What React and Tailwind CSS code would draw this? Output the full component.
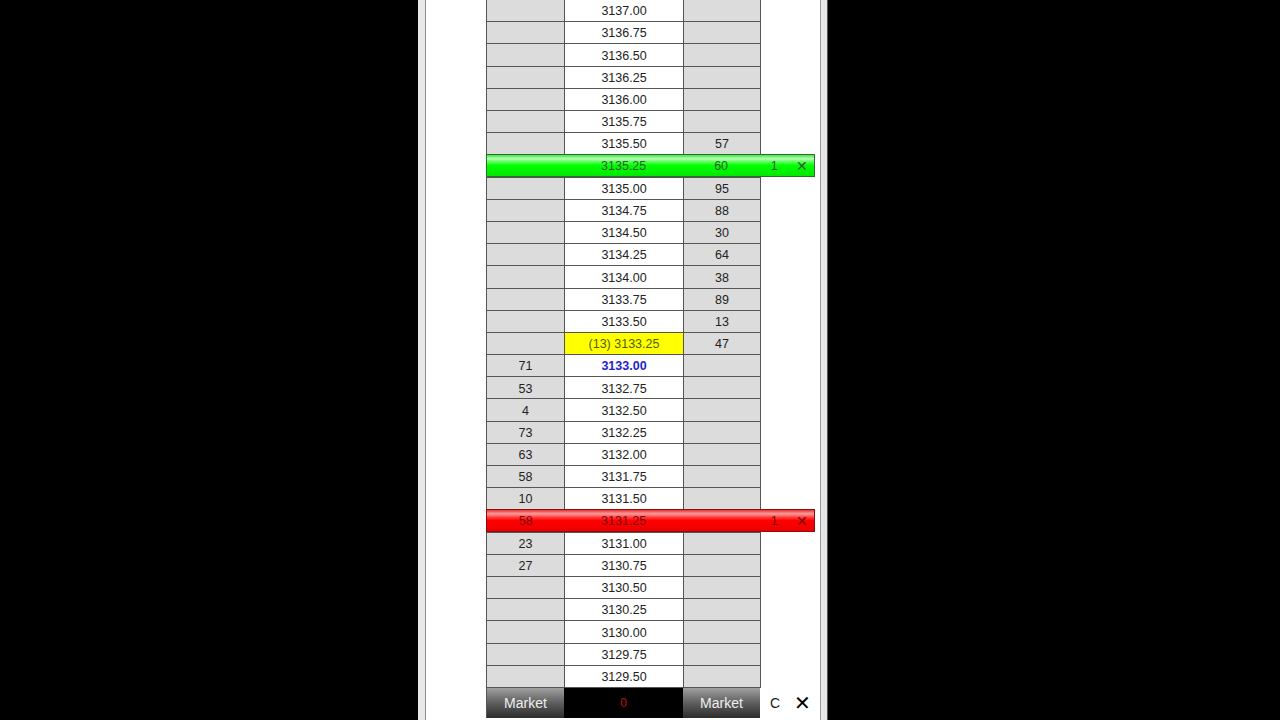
import React from 'react';

const font = { fontFamily: '"Liberation Sans", Arial, sans-serif' };

const ROWS = 31;
const prices = Array.from({ length: ROWS }, (_, i) => (3137 - i * 0.25).toFixed(2));

const bids = { 16: '71', 17: '53', 18: '4', 19: '73', 20: '63', 21: '58', 22: '10', 23: '58', 24: '23', 25: '27' };
const asks = { 6: '57', 7: '60', 8: '95', 9: '88', 10: '30', 11: '64', 12: '38', 13: '89', 14: '13', 15: '47' };

const ROW_H = 688 / ROWS;

const OrderBar = ({ row, color, bid, price, ask }) => {
  const bg =
    color === 'green'
      ? 'bg-[linear-gradient(to_bottom,#3fe83f_0%,#b6ffb6_18%,#4cff4c_35%,#00ff00_50%,#00e800_100%)] text-[#2d5d2d] border-[#2d6d2d]'
      : 'bg-[linear-gradient(to_bottom,#e83030_0%,#ff9d9d_18%,#ff3b3b_35%,#ff0000_50%,#ee0000_100%)] text-[#7a0a0a] border-[#8a1010]';
  return (
    <div
      className={`absolute left-0 w-[329px] h-[23px] flex items-center pt-[1px] border ${bg}`}
      style={{ top: row * ROW_H - 1 }}
    >
      <div className="w-[78px] text-center">{bid}</div>
      <div className="w-[119px] text-center">{price}</div>
      <div className="w-[77px] text-center">{ask}</div>
      <div className="w-[30px] text-center">1</div>
      <div className="w-[25px] text-center text-[14px]">✕</div>
    </div>
  );
};

export default function App() {
  return (
    <div className="w-[1280px] h-[720px] bg-black flex text-[12.5px] text-[#222]" style={font}>
      <div className="ml-[418px] w-[410px] h-full bg-white flex">
        <div className="w-[7px] h-full bg-[#e9e9e9]" />
        <div className="w-[1px] h-full bg-[#8c8c8c]" />
        <div className="flex-1 h-full relative">
          <div className="ml-[60px] w-[329px] relative">
            <div className="w-[274px] h-[688px] grid grid-rows-[repeat(31,1fr)] border-l border-[#555]">
              {prices.map((p, i) => {
                const isYellow = i === 15;
                const isBlue = i === 16;
                return (
                  <div key={p} className="grid grid-cols-[78px_119px_77px] border-b border-[#555]">
                    <div className="bg-[#dcdcdc] border-r border-[#555] flex items-center justify-center pt-[2px]">
                      {bids[i] || ''}
                    </div>
                    <div
                      className={`border-r border-[#555] flex items-center justify-center pt-[2px] ${
                        isYellow ? 'bg-[#ffff00] text-[#4f5f00]' : 'bg-white'
                      } ${isBlue ? 'text-[#2424c8] font-bold' : ''}`}
                    >
                      {isYellow ? `(13) ${p}` : p}
                    </div>
                    <div className="bg-[#dcdcdc] border-r border-[#555] flex items-center justify-center pt-[2px]">
                      {asks[i] || ''}
                    </div>
                  </div>
                );
              })}
            </div>
            <OrderBar row={7} color="green" bid="" price="3135.25" ask="60" />
            <OrderBar row={23} color="red" bid="58" price="3131.25" ask="" />
            <div className="h-[30px] flex items-stretch text-[14px]">
              <div className="w-[78px] bg-[linear-gradient(to_bottom,#a0a0a0,#5e5e5e_50%,#2c2c2c)] text-[#eeeeee] flex items-center justify-center border-l border-[#555]">
                Market
              </div>
              <div className="w-[119px] bg-black text-[#c01010] text-[12px] flex items-center justify-center">0</div>
              <div className="w-[77px] bg-[linear-gradient(to_bottom,#a0a0a0,#5e5e5e_50%,#2c2c2c)] text-[#eeeeee] flex items-center justify-center">
                Market
              </div>
              <div className="w-[30px] flex items-center justify-center text-[14px] text-[#222]">C</div>
              <div className="w-[25px] flex items-center justify-center text-[20px] text-black">✕</div>
            </div>
          </div>
        </div>
        <div className="w-[1px] h-full bg-[#9a9a9a]" />
        <div className="w-[6px] h-full bg-[#e6e6e6]" />
        <div className="w-[1px] h-full bg-[#555]" />
      </div>
    </div>
  );
}
